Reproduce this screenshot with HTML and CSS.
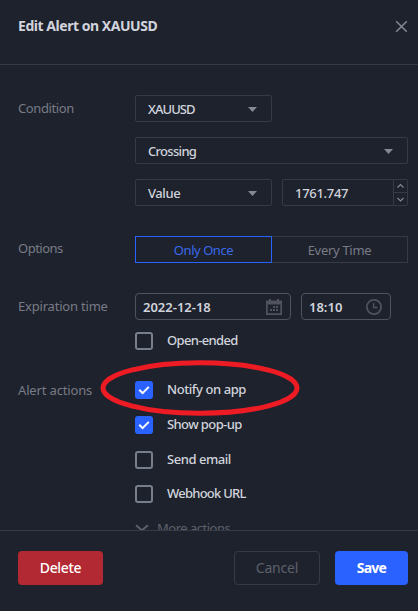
FILE: index.html
```html
<!DOCTYPE html>
<html lang="en">
<head>
<meta charset="utf-8">
<title>Edit Alert on XAUUSD</title>
<link rel="stylesheet" href="styles.css">
</head>
<body>
<div class="dialog">
  <header class="header">
    <h1 class="title">Edit Alert on XAUUSD</h1>
    <svg class="close" width="13" height="13" viewBox="0 0 13 13"><path d="M1.2 1.2l10.6 10.6M11.8 1.2L1.2 11.8"/></svg>
  </header>
  <main class="body">
    <section class="row condition">
      <div class="label l-condition">Condition</div>
      <div class="fields stack">
        <div class="select half"><span class="t-symbol">XAUUSD</span><i class="caret"></i></div>
        <div class="select"><span class="t-crossing">Crossing</span><i class="caret"></i></div>
        <div class="pair">
          <div class="select half"><span class="t-value">Value</span><i class="caret"></i></div>
          <div class="number"><span class="t-number">1761.747</span>
            <div class="spin">
              <svg width="13" height="12" viewBox="0 0 13 12"><path d="M3.5 7.5l3-3 3 3"/></svg>
              <svg width="13" height="12" viewBox="0 0 13 12"><path d="M3.5 5l3 3 3-3"/></svg>
            </div>
          </div>
        </div>
      </div>
    </section>
    <section class="row options">
      <div class="label l-options">Options</div>
      <div class="fields tabs">
        <div class="tab active"><span class="t-once">Only Once</span></div>
        <div class="tab"><span class="t-every">Every Time</span></div>
      </div>
    </section>
    <section class="row expiration">
      <div class="label l-expiration">Expiration time</div>
      <div class="fields">
        <div class="pair">
          <div class="input date"><span class="t-date">2022-12-18</span>
            <svg width="16" height="16" viewBox="0 0 16 16" fill="#50535e"><path fill-rule="evenodd" d="M0 1.5h3V0h2v1.5h6V0h2v1.5h3V16H0zM1.7 5.5v8.8h12.6V5.5z"/><path d="M7 7h2v2H7zM10 7h2v2h-2zM4 10h2v2H4zM7 10h2v2H7zM10 10h2v2h-2z"/></svg>
          </div>
          <div class="input time"><span class="t-time">18:10</span>
            <svg width="16" height="16" viewBox="0 0 16 16" fill="none" stroke="#50535e" stroke-width="1.8"><circle cx="8" cy="8" r="7.1"/><path d="M7.6 4v4.4h3.9" stroke-width="1.5"/></svg>
          </div>
        </div>
        <div class="check open-ended"><i class="box"></i><span class="t-open">Open-ended</span></div>
      </div>
    </section>
    <section class="row actions">
      <div class="label l-actions">Alert actions</div>
      <div class="fields checks">
        <div class="check"><svg class="box on" viewBox="0 0 18 18"><path d="M4.3 8.8l3.3 3.3 6.2-6.2"/></svg><span class="t-notify">Notify on app</span></div>
        <div class="check"><svg class="box on" viewBox="0 0 18 18"><path d="M4.3 8.8l3.3 3.3 6.2-6.2"/></svg><span class="t-show">Show pop-up</span></div>
        <div class="check"><i class="box"></i><span class="t-send">Send email</span></div>
        <div class="check"><i class="box"></i><span class="t-webhook">Webhook URL</span></div>
        <div class="more"><svg width="14" height="8" viewBox="0 0 14 8"><path d="M1 1.2l6 5 6-5"/></svg><span class="t-more">More actions</span></div>
      </div>
    </section>
  </main>
  <footer class="footer">
    <div class="btn delete"><span class="t-delete">Delete</span></div>
    <div class="btn cancel"><span class="t-cancel">Cancel</span></div>
    <div class="btn save"><span class="t-save">Save</span></div>
  </footer>
  <svg class="highlight" width="200" height="56" viewBox="0 0 200 56"><ellipse cx="100" cy="28" rx="97" ry="25.2"/></svg>
</div>
</body>
</html>
```
FILE: styles.css
```css
* { box-sizing: border-box; }
body { margin: 0; background: #1e222d; font: 500 13px/18px "Noto Sans", "Open Sans", sans-serif; color: #d1d4dc; }
.dialog { position: relative; width: 418px; height: 611px; display: flex; flex-direction: column; overflow: hidden; white-space: nowrap; }
.header { height: 65px; flex: none; display: flex; justify-content: space-between; padding: 17px 10px 0 18px; border-bottom: 1px solid #363a45; }
.title { margin: 0; font-size: 14px; line-height: 18px; font-weight: 700; letter-spacing: -.46px; }
.close { margin-top: 3px; fill: none; stroke: #868993; stroke-width: 1.5; }
.body { height: 465px; flex: none; padding: 30px 10px 0 18px; overflow: hidden; }
.row { display: flex; }
.label { width: 117px; flex: none; color: #787b86; font-weight: 400; line-height: 27px; }
.fields { flex: 1; }
.stack { display: flex; flex-direction: column; gap: 15px; }
.pair { display: flex; gap: 10px; }
.select, .number { height: 27px; border: 1px solid #363a45; border-radius: 2px; display: flex; align-items: center; justify-content: space-between; padding: 1px 14px 0 12px; }
.half { width: 137px; }
.caret { width: 9px; height: 5px; margin-top: 1px; background: #868993; clip-path: polygon(0 0, 100% 0, 50% 100%); }
.number { flex: 1; padding: 0 0 0 12px; }
.spin { width: 14px; height: 25px; border-left: 1px solid #363a45; display: grid; grid-template-rows: 13px 12px; }
.spin svg { fill: none; stroke: #868993; stroke-width: 1.2; }
.spin svg:first-child { height: 13px; border-bottom: 1px solid #363a45; }
.options { margin-top: 30px; }
.options .label { line-height: 25px; }
.tabs { display: flex; }
.tab { flex: 1; height: 27px; border: 1px solid #363a45; border-left: 0; line-height: 26px; text-align: center; color: #787b86; font-weight: 400; }
.tab.active { border: 1px solid #2962ff; color: #3969ea; }
.expiration { margin-top: 30px; }
.input { height: 27px; border: 1px solid #50535e; border-radius: 4px; display: flex; align-items: center; justify-content: space-between; padding: 1px 8px 0 7px; }
.date { width: 156px; }
.time { width: 90px; }
.check { display: flex; align-items: center; gap: 14px; height: 18px; }
.check span { position: relative; top: -1px; }
.open-ended { margin-top: 12px; }
.box { width: 18px; height: 18px; flex: none; border: 2px solid #787f8c; border-radius: 3px; }
.box.on { border: 0; background: #2962ff; fill: none; stroke: #fff; stroke-width: 2; }
.actions { margin-top: 31px; }
.actions .label { line-height: 19px; }
.checks { display: flex; flex-direction: column; gap: 17px; }
.checks .check:nth-child(4) { margin-top: -1px; }
.more { display: flex; align-items: center; gap: 8px; height: 18px; margin-top: -1px; color: #5d606b; font-weight: 400; }
.more svg { fill: none; stroke: #5d606b; stroke-width: 2; }
.footer { height: 81px; flex: none; border-top: 1px solid #363a45; padding: 20px 10px 0 18px; display: flex; }
.btn { height: 34px; border-radius: 4px; line-height: 34px; text-align: center; font-size: 14px; }
.delete { width: 85px; background: #b22833; color: #fff; margin-right: auto; }
.cancel { width: 86px; border: 1px solid #363a45; line-height: 32px; color: #5d606b; font-weight: 400; margin-right: 15px; }
.save { width: 73px; background: #2962ff; color: #fff; font-weight: 700; }
.highlight { position: absolute; left: 100px; top: 360px; fill: none; stroke: #ed1c24; stroke-width: 5; }

/* Tracking per label */
.l-condition { letter-spacing: -.4px; }
.l-options { letter-spacing: -.5px; }
.l-expiration { letter-spacing: -.2px; }
.l-actions { letter-spacing: -.15px; }
.t-symbol { letter-spacing: -.95px; }
.t-crossing { letter-spacing: -.7px; }
.t-value { letter-spacing: -.4px; }
.t-number { letter-spacing: -.3px; }
.t-once { letter-spacing: -.45px; }
.t-every { letter-spacing: -.3px; }
.t-date { font-weight: 600; }
.t-time { font-weight: 600; }
.t-open { letter-spacing: -.65px; }
.t-notify { letter-spacing: -.42px; }
.t-show { letter-spacing: -.6px; }
.t-send { letter-spacing: -.45px; }
.t-webhook { letter-spacing: -.75px; }
.t-more { letter-spacing: -.5px; }
.t-delete { letter-spacing: -.35px; }
.t-cancel { letter-spacing: -.2px; }
.t-save { letter-spacing: -.8px; }
```
